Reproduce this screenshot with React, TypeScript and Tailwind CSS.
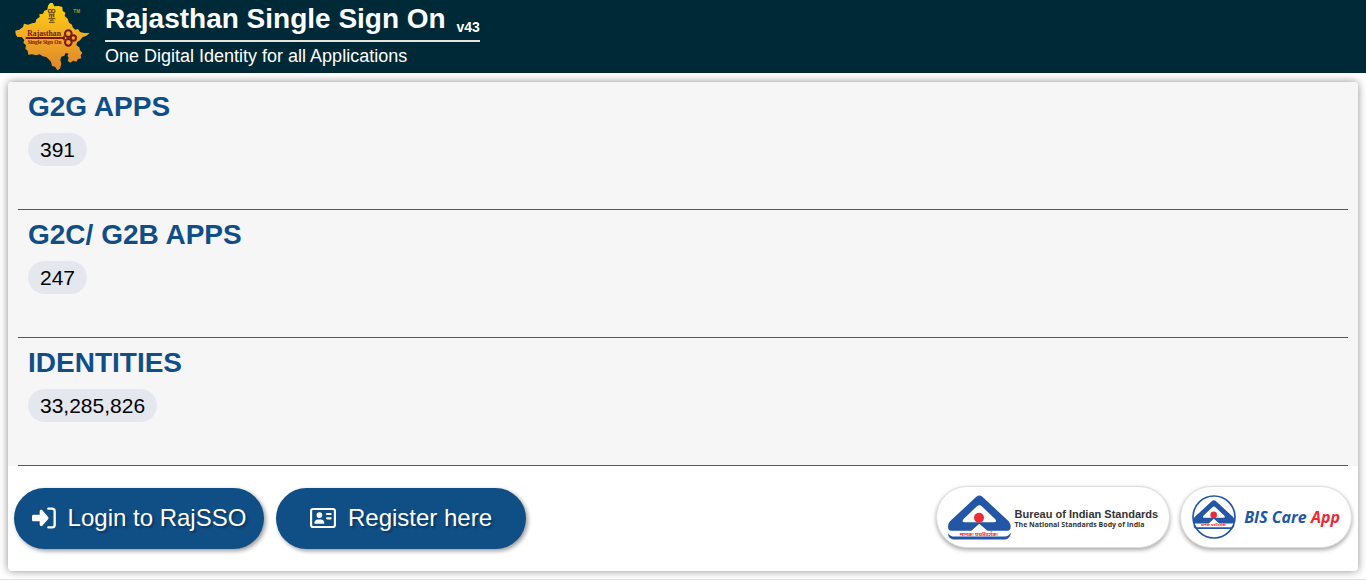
import { FaRegAddressCard } from 'react-icons/fa6';

interface Stat {
  label: string;
  value: number;
}

const STATS: Stat[] = [
  { label: 'G2G APPS', value: 391 },
  { label: 'G2C/ G2B APPS', value: 247 },
  { label: 'IDENTITIES', value: 33285826 },
];

const ACTION_CLASS =
  'flex h-[61px] w-[250px] items-center justify-center gap-3 rounded-full bg-[#104e86] pb-0.5 text-2xl text-white shadow-[2px_2px_4px_rgba(0,0,0,0.4)] [text-shadow:2px_2px_2px_rgba(0,0,0,0.3)]';

const PARTNER_CLASS =
  'flex h-[62px] items-center rounded-full border border-[#dedede] bg-white shadow-[0_2px_4px_rgba(0,0,0,0.35)]';

function RajasthanLogo() {
  return (
    <svg viewBox="45 5 225 207" className="h-[69px] w-[75px] shrink-0" role="img" aria-label="Rajasthan Single Sign On">
      <defs>
        <linearGradient id="map-fill" x1="0" y1="0" x2="0" y2="1">
          <stop offset="0" stopColor="#fdd20a" />
          <stop offset="0.45" stopColor="#f2ae22" />
          <stop offset="1" stopColor="#dd842e" />
        </linearGradient>
      </defs>
      <path
        fill="url(#map-fill)"
        d="M144 16L150 8L158 8L163 18L176 17L187 20L188 32L196 37L194 47L203 55L207 67L216 73L218 81L226 88L234 86L240 95L252 98L269 99L258 107L248 110L240 120L231 126L229 135L238 141L240 150L247 157L242 165L244 174L234 176L229 184L220 181L211 187L203 181L206 173L202 166L206 160L197 158L193 166L184 169L181 178L184 191L180 205L172 210L165 199L156 197L153 184L146 177L139 170L128 168L119 162L108 165L96 162L85 163L83 151L76 145L78 134L70 128L73 119L65 110L52 110L47 102L46 91L58 88L69 80L72 70L84 73L96 69L106 67L109 57L119 50L118 42L129 40L133 31L142 28Z"
      />
      <g fill="none" stroke="#79530d" strokeWidth="4">
        <circle cx="150" cy="32" r="5" />
        <circle cx="160" cy="32" r="5" />
        <path d="M147 40c3 4 13 4 16 0M149 42v9M155 42v11M161 42v9M145 55h21M150 60h11M147 66h17" />
      </g>
      <text x="220" y="39" fill="#b99518" fontSize="14" className="font-['Liberation_Sans'] font-bold">
        TM
      </text>
      <g stroke="#7b1715" fill="none">
        <path d="M77 113h116" strokeWidth="6" />
        <circle cx="205" cy="100" r="10" strokeWidth="6" />
        <circle cx="205" cy="126" r="10" strokeWidth="6" />
        <circle cx="220" cy="113" r="8" strokeWidth="6" />
        <path d="M192 106v14" strokeWidth="5" />
      </g>
      <text x="82" y="107" fill="#7b1715" fontSize="23" className="font-['Liberation_Serif'] font-bold">
        Rajasthan
      </text>
      <text x="83" y="130" fill="#7b1715" fontSize="16" className="font-['Liberation_Serif'] font-bold">
        Single Sign On
      </text>
    </svg>
  );
}

function LoginIcon() {
  return (
    <svg viewBox="0 0 72 66" className="h-[22px] w-6 shrink-0" aria-hidden="true">
      <path
        fill="#fff"
        d="M5 23h18v-9c0-5 4-7 8-4l17 19c2 3 2 5 0 8L31 56c-4 3-8 1-8-4v-9H5c-3 0-5-2-5-5v-10c0-3 2-5 5-5z"
      />
      <path fill="none" stroke="#fff" strokeWidth="7" strokeLinecap="round" d="M49 5h11q8 0 8 8v40q0 8-8 8H49" />
    </svg>
  );
}

/* Triangle mark, shared by both partner badges */
function BisShapes() {
  return (
    <>
      <path
        fill="#2456a6"
        d="M154 64q9-8 18 0l79 73q6 7 6 17 0 12-10 12h-60l-24-21-24 21h-60q-10 0-10-12 0-10 6-17z"
      />
      <path fill="#fff" d="M163 89q4 0 8 4l40 38q6 9-4 9h-88q-10 0-4-9l40-38q4-4 8-4z" />
      <circle cx="162" cy="127" r="15" fill="#ee2a35" />
      <path
        fill="#2456a6"
        d="M69 173q7 10 19 10h151q12 0 19-11-1 9-7 15-4 5-11 5H86q-7 0-12-5-5-6-5-14z"
      />
      <text x="104" y="180" fill="#ee2a35" fontSize="16" className="font-['Noto_Sans',sans-serif] font-bold">
        मानकः पथप्रदर्शकः
      </text>
    </>
  );
}

function BisLogo() {
  return (
    <svg viewBox="69 59 189 134" className="h-[45px] w-[63px] shrink-0" aria-hidden="true">
      <BisShapes />
    </svg>
  );
}

function BisCareLogo() {
  return (
    <svg viewBox="0 0 132 132" className="size-11 shrink-0" aria-hidden="true">
      <circle cx="66" cy="66" r="63" fill="#fff" stroke="#2456a6" strokeWidth="5" />
      <svg x="4" y="15" width="124" height="88" viewBox="69 59 189 134">
        <BisShapes />
      </svg>
    </svg>
  );
}

export default function App() {
  return (
    <div className="border-b border-[#e4e4e4] bg-white pb-2 font-['Liberation_Sans',Arial,sans-serif] text-black">
      <header className="flex items-start gap-[15px] bg-[#002938] px-[15px] py-0.5 text-white">
        <RajasthanLogo />
        <div>
          <h1 className="border-b-2 border-[#e8e4dc] pb-1 text-[28px] leading-[34px] font-bold">
            Rajasthan Single Sign On <sub className="ml-[3px] text-sm leading-none">v43</sub>
          </h1>
          <p className="text-lg leading-7">One Digital Identity for all Applications</p>
        </div>
      </header>

      <main className="mx-2 mt-[9px] rounded-sm bg-white shadow-[0_0_8px_rgba(0,0,0,0.45)]">
        <div className="rounded-t-sm bg-[#f6f6f6] px-2.5">
          {STATS.map((stat) => (
            <section key={stat.label} className="border-b border-[#2b6192] px-2.5 pt-[7px] pb-[43px]">
              <h2 className="text-[28px] leading-9 font-bold text-[#104e88]">{stat.label}</h2>
              <p className="mt-2 w-fit rounded-full bg-[#e4e7ee] px-3 text-[21px] leading-[33px]">
                {stat.value.toLocaleString('en-US')}
              </p>
            </section>
          ))}
        </div>

        <div className="flex flex-wrap items-start justify-between gap-3 px-1.5 pt-5 pb-[22px]">
          <div className="flex flex-wrap gap-3 pt-0.5">
            <button type="button" className={ACTION_CLASS}>
              <LoginIcon />
              Login to RajSSO
            </button>
            <button type="button" className={ACTION_CLASS}>
              <FaRegAddressCard className="size-[26px]" />
              Register here
            </button>
          </div>

          <div className="flex flex-wrap gap-2.5">
            <a href="#bis" className={`${PARTNER_CLASS} gap-[3px] px-[11px]`}>
              <BisLogo />
              <span className="pt-1 font-bold text-[#333]">
                <span className="block text-[11px] leading-3">Bureau of Indian Standards</span>
                <span className="block font-['Open_Sans',sans-serif] text-[7px] leading-[10px]">
                  The National Standards Body of India
                </span>
              </span>
            </a>
            <a href="#bis-care" className={`${PARTNER_CLASS} gap-2 px-[11px]`}>
              <BisCareLogo />
              <span className="font-['Open_Sans',sans-serif] text-base font-bold text-[#2456a6] italic">
                BIS Care <span className="text-[#ee2a35]">App</span>
              </span>
            </a>
          </div>
        </div>
      </main>
    </div>
  );
}
